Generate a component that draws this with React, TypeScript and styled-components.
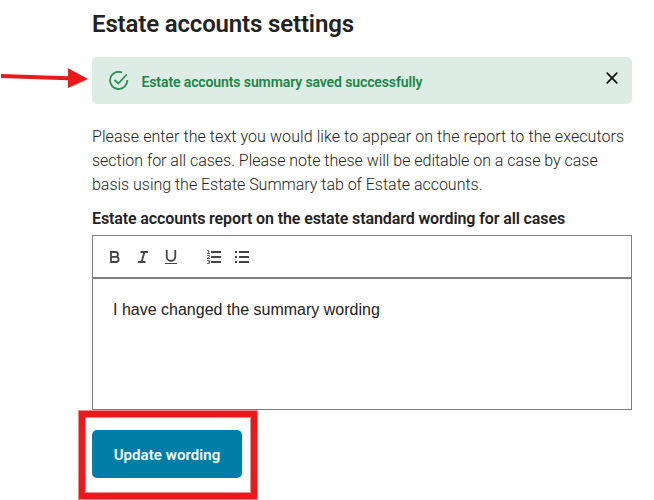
import React from "react";
import styled, { createGlobalStyle } from "styled-components";

const GlobalStyle = createGlobalStyle`
  * { box-sizing: border-box; }
  body { margin: 0; background: #fff; font-family: Roboto, "Liberation Sans", sans-serif; color: #222; overflow: hidden; }
`;

const Page = styled.main`
  position: relative;
  width: 654px;
  height: 500px;
  padding: 8px 22px 0 92px;
  overflow: hidden;
`;

const Title = styled.h1`
  margin: 0 0 17px;
  font-size: 24px;
  line-height: 32px;
  font-weight: 600;
  letter-spacing: -0.15px;
  color: #222;
  white-space: nowrap;
`;

const Alert = styled.div`
  display: flex;
  align-items: center;
  height: 47px;
  padding: 0 13px 0 17px;
  border-radius: 5px;
  background: #ddece4;
  color: #1c8648;
`;

const AlertText = styled.span`
  flex: 1;
  padding: 3px 0 0 12.5px;
  font-size: 14px;
  line-height: 20px;
  font-weight: 600;
  letter-spacing: -0.11px;
  white-space: nowrap;
`;

const CloseButton = styled.button`
  display: flex;
  padding: 0;
  margin-top: -5px;
  border: 0;
  background: none;
`;

const Intro = styled.p`
  margin: 21px 0 10px;
  font-size: 16px;
  line-height: 24px;
  font-weight: 300;
`;

const Line = styled.span<{ $spacing: number }>`
  display: block;
  white-space: nowrap;
  letter-spacing: ${(p) => p.$spacing}px;
`;

const Label = styled.label`
  display: block;
  height: 28px;
  font-size: 16px;
  line-height: 24px;
  font-weight: 600;
  letter-spacing: -0.115px;
  white-space: nowrap;
`;

const Editor = styled.section`
  height: 175px;
  border: 1px solid #7f7f7f;
`;

const Toolbar = styled.div`
  display: flex;
  align-items: center;
  height: 43px;
  padding-left: 13px;
  gap: 10px;
  border-bottom: 2px solid #7f7f7f;
`;

const Tool = styled.button<{ $gap?: number }>`
  display: flex;
  padding: 0;
  border: 0;
  margin-left: ${(p) => p.$gap ?? 0}px;
  background: none;
`;

const Content = styled.div`
  padding: 19px 20px;
  font-family: "Liberation Sans", Arial, sans-serif;
  font-size: 16px;
  line-height: 24px;
  white-space: nowrap;
`;

const UpdateButton = styled.button`
  display: block;
  width: 150px;
  height: 48px;
  margin-top: 20px;
  padding: 2px 0 0;
  border: 0;
  border-radius: 5px;
  background: #007ea8;
  color: #fff;
  font: 600 15px/20px Roboto, sans-serif;
  letter-spacing: 0.07px;
  white-space: nowrap;
`;

const Highlight = styled.div`
  position: absolute;
  left: 79px;
  top: 411px;
  width: 178px;
  height: 88px;
  border: 6px solid #e81a1c;
  box-shadow: 0 0 0 1px #f28a8b, inset 0 0 0 1px #f28a8b;
`;

const Arrow = styled.svg`
  position: absolute;
  left: 0;
  top: 64px;
`;

export default function App() {
  return (
    <>
      <GlobalStyle />
      <Page>
        <Title>Estate accounts settings</Title>
        <Alert role="status">
          <svg width="20" height="20" viewBox="0 0 20 20" fill="none" stroke="#2b8f56" strokeWidth="1.8">
            <path d="M13 1.5A8.6 8.6 0 1 0 18.3 9" />
            <path d="M5.5 9l3.8 3.5 8.4-9" />
          </svg>
          <AlertText>Estate accounts summary saved successfully</AlertText>
          <CloseButton aria-label="Close">
            <svg width="14" height="14" viewBox="0 0 14 14" stroke="#111" strokeWidth="1.7">
              <path d="M1.7 1.7l10.6 10.6M12.3 1.7L1.7 12.3" />
            </svg>
          </CloseButton>
        </Alert>
        <Intro>
          <Line $spacing={0.08}>Please enter the text you would like to appear on the report to the executors</Line>
          <Line $spacing={-0.02}>section for all cases. Please note these will be editable on a case by case</Line>
          <Line $spacing={-0.02}>basis using the Estate Summary tab of Estate accounts.</Line>
        </Intro>
        <Label>Estate accounts report on the estate standard wording for all cases</Label>
        <Editor>
          <Toolbar>
            <Tool aria-label="Bold">
              <svg width="18" height="18" viewBox="0 0 18 18" fill="none" stroke="#444" strokeWidth="1.8">
                <path d="M5 4h4.5a2.4 2.4 0 0 1 0 4.9H5zM5 8.9h5.5a2.6 2.6 0 0 1 0 5.1H5z" />
              </svg>
            </Tool>
            <Tool aria-label="Italic">
              <svg width="18" height="18" viewBox="0 0 18 18" fill="none" stroke="#444" strokeWidth="1.8">
                <path d="M6.5 4H14M4 14h7.5M10.5 4l-3 10" />
              </svg>
            </Tool>
            <Tool aria-label="Underline">
              <svg width="18" height="18" viewBox="0 0 18 18" fill="none" stroke="#444">
                <path strokeWidth="1.8" d="M4.7 2v6.5a4.3 4.3 0 0 0 8.6 0V2" />
                <path d="M3 15.5h12" />
              </svg>
            </Tool>
            <Tool aria-label="Numbered list" $gap={15}>
              <svg width="18" height="18" viewBox="0 0 18 18" fill="none" stroke="#444">
                <path strokeWidth="2" d="M6 4h10M6 9h10M6 14h10" />
                <path d="M2 2.5h1.5V6M2 5.5h3M2 7.5h2.5v1L2 10.5h3M2 12.5h2.5v3H2M3 14h1.5" strokeWidth=".8" />
              </svg>
            </Tool>
            <Tool aria-label="Bulleted list">
              <svg width="18" height="18" viewBox="0 0 18 18" fill="none" stroke="#444" strokeWidth="2">
                <path d="M6 4h10M6 9h10M6 14h10M2 4h2M2 9h2M2 14h2" />
              </svg>
            </Tool>
          </Toolbar>
          <Content>I have changed the summary wording</Content>
        </Editor>
        <UpdateButton>Update wording</UpdateButton>
        <Highlight />
        <Arrow width="92" height="28" viewBox="0 0 92 28" fill="#e81a1c">
          <path d="M1 10l67 2.2V4.3L88 15 68 24v-7.8L1 14z" />
        </Arrow>
      </Page>
    </>
  );
}
